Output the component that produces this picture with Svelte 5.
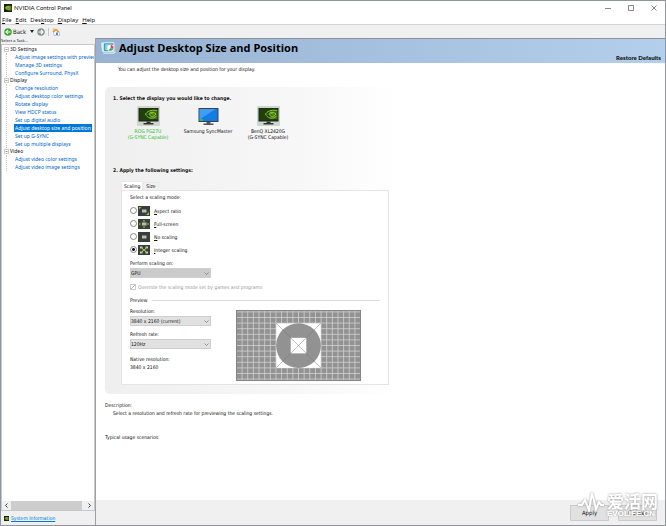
<script>
    const menu = ['File', 'Edit', 'Desktop', 'Display', 'Help'];
    const underlined = [0, 0, 3, 0, 0];

    const groups = [
        { title: '3D Settings', items: ['Adjust image settings with preview', 'Manage 3D settings', 'Configure Surround, PhysX'] },
        {
            title: 'Display',
            items: [
                'Change resolution',
                'Adjust desktop color settings',
                'Rotate display',
                'View HDCP status',
                'Set up digital audio',
                'Adjust desktop size and position',
                'Set up G-SYNC',
                'Set up multiple displays',
            ],
        },
        { title: 'Video', items: ['Adjust video color settings', 'Adjust video image settings'] },
    ];

    const displays = [
        { name: 'ROG PG27U', note: '(G-SYNC Capable)', gsync: true },
        { name: 'Samsung SyncMaster', note: '', gsync: false },
        { name: 'BenQ XL2420G', note: '(G-SYNC Capable)', gsync: true },
    ];

    const modes = [
        { id: 'aspect', key: 'A', rest: 'spect ratio' },
        { id: 'full', key: 'F', rest: 'ull-screen' },
        { id: 'none', key: 'N', rest: 'o scaling' },
        { id: 'integer', key: 'I', rest: 'nteger scaling' },
    ];

    const columns = Array.from({ length: 21 }, (_, i) => (i - 10) * 5.64 + 62.5);
    const rows = Array.from({ length: 13 }, (_, i) => (i - 6) * 5.6 + 35.5);

    let task = $state('Adjust desktop size and position');
    let display = $state('ROG PG27U');
    let mode = $state('integer');
</script>

{#snippet eye()}
    <svg class="eye" viewBox="0 0 16 16">
        <rect width="16" height="16" fill="#17200c" />
        <path d="M1 8C4 3 9 2 15 4V13C10 14 5 13 1 8Z" fill="#547b13" />
        <path d="M3 8C6 4 10 4 13 8C10 12 6 11 5 8C7 6 9 7 10 8" fill="none" stroke="#b5d36b" stroke-width="1.4" />
    </svg>
{/snippet}

{#snippet chevron()}
    <svg class="chevron" viewBox="0 0 5 3"><path d="M.5 .5L2.5 2.5L4.5 .5" fill="none" stroke="#777" stroke-width=".7" /></svg>
{/snippet}

<div class="window">
    <header class="titlebar">
        {@render eye()}
        <span class="caption">NVIDIA Control Panel</span>
        <button class="win" aria-label="Minimize"><svg viewBox="0 0 6 6"><path d="M0 3.5H6" /></svg></button>
        <button class="win" aria-label="Maximize"><svg viewBox="0 0 6 6"><path d="M.5 .5H5.5V5.5H.5Z" /></svg></button>
        <button class="win" aria-label="Close"><svg viewBox="0 0 6 6"><path d="M.5 .5L5.5 5.5M5.5 .5L.5 5.5" /></svg></button>
    </header>

    <nav class="menu">
        {#each menu as item, i}
            <button>{item.slice(0, underlined[i])}<u>{item[underlined[i]]}</u>{item.slice(underlined[i] + 1)}</button>
        {/each}
    </nav>

    <div class="toolbar">
        <button class="back">
            <svg class="round" viewBox="0 0 16 16">
                <circle cx="8" cy="8" r="7.5" fill="#35a82c" />
                <path d="M13 8H4M8 4L4 8L8 12" fill="none" stroke="#fff" stroke-width="2.4" />
            </svg>
            Back
        </button>
        <button class="arrow" aria-label="History"><svg viewBox="0 0 4 3"><path d="M0 0H4L2 3Z" fill="#222" /></svg></button>
        <button class="forward" aria-label="Forward">
            <svg class="round" viewBox="0 0 16 16">
                <circle cx="8" cy="8" r="7.5" fill="#8b8f92" />
                <path d="M3 8H12M8 4L12 8L8 12" fill="none" stroke="#fff" stroke-width="2.4" />
            </svg>
        </button>
        <button class="home" aria-label="Home">
            <svg class="round" viewBox="0 0 16 16">
                <path d="M3 8L10 3L15 9V15H4Z" fill="#f5f8fc" stroke="#7e9cc4" />
                <path d="M1 7L8 1L15 8L12 9L8 4L3 9Z" fill="#e98a2c" />
                <path d="M2 1H6L3 5H1Z" fill="#edb15f" />
                <rect x="8" y="9" width="4" height="5" fill="#5089ca" />
            </svg>
        </button>
    </div>

    <div class="body">
        <aside>
            <div class="select-task">Select a Task...</div>
            <div class="tree">
                {#each groups as group}
                    <div class="group">
                        <div class="group-title">
                            <svg class="toggle" viewBox="0 0 5 5"><path d="M.5 .5H4.5V4.5H.5Z" fill="#fff" stroke="#aaa" stroke-width=".6" /><path d="M1.5 2.5H3.5" stroke="#555" stroke-width=".6" /></svg>
                            {group.title}
                        </div>
                        <div class="items">
                            {#each group.items as item}
                                <a href="#task" class:selected={task === item} onclick={() => (task = item)}>{item}</a>
                            {/each}
                        </div>
                    </div>
                {/each}
            </div>
            <div class="scrollbar">
                <button aria-label="Scroll left"><svg viewBox="0 0 3 5"><path d="M2.5 .5L.5 2.5L2.5 4.5" /></svg></button>
                <div class="thumb"></div>
                <button aria-label="Scroll right"><svg viewBox="0 0 3 5"><path d="M.5 .5L2.5 2.5L.5 4.5" /></svg></button>
            </div>
            <div class="system">{@render eye()}<a href="#system">System Information</a></div>
        </aside>

        <main>
            <div class="banner">
                <svg class="banner-icon" viewBox="0 0 30 26">
                    <path d="M1 2H9L11 21L3 20Z" fill="#dcecf5" stroke="#68a7c7" />
                    <rect x="6" y="3" width="20" height="17" rx="1" fill="#3e9fc2" stroke="#e6f3fa" stroke-width="2" />
                    <path d="M10 6H16V17H10Z" fill="#87dcec" />
                    <circle cx="20" cy="13" r="6.5" fill="#f7f9f8" />
                    <path d="M20 13V7A6 6 0 0 1 25 15Z" fill="#e04b3a" />
                    <path d="M20 13L25 15A6 6 0 0 1 16 17Z" fill="#42a652" />
                    <path d="M6 23H25L29 20" fill="none" stroke="#dcecf5" stroke-width="2" />
                </svg>
                <h1>Adjust Desktop Size and Position</h1>
                <button class="restore">Restore Defaults</button>
            </div>

            <div class="content">
                <p class="intro">You can adjust the desktop size and position for your display.</p>

                <section class="card">
                    <h2>1. Select the display you would like to change.</h2>
                    <div class="displays">
                        {#each displays as item}
                            <button class="display" class:active={display === item.name} onclick={() => (display = item.name)}>
                                <svg class="monitor" viewBox="0 0 46 40">
                                    {#if item.gsync}
                                        <rect width="46" height="40" rx="2" fill="#cbd8cb" />
                                        <rect x="3" y="4" width="40" height="27" fill="#222922" />
                                        <rect x="5" y="6" width="36" height="22" fill="#1f4009" />
                                        <path d="M26 8H41V26H26Z" fill="#3a6c10" />
                                        <path d="M17 16C23 8 32 8 40 9M17 16C20 24 31 28 39 20M22 17C27 11 33 12 38 16C33 23 27 22 25 17C28 14 31 15 33 17" fill="none" stroke="#8cc832" stroke-width="2" />
                                        <path d="M19 31H27V34H33V37H13V34H19Z" fill="#303730" />
                                    {:else}
                                        <rect x="3" y="4" width="40" height="28" fill="#3a4148" />
                                        <rect x="5" y="6" width="36" height="24" fill="#137de5" />
                                        <path d="M5 6H37L5 27Z" fill="#3f9ff5" />
                                        <path d="M5 26H12V30H5Z" fill="#39b86b" />
                                        <path d="M19 32H27V35H33V38H13V35H19Z" fill="#55585b" />
                                    {/if}
                                </svg>
                                <span>{item.name}</span>
                                <span>{item.note}</span>
                            </button>
                        {/each}
                    </div>

                    <h2>2. Apply the following settings:</h2>
                    <div class="tabs">
                        <button class="tab current">Scaling</button>
                        <button class="tab">Size</button>
                    </div>
                    <div class="pane">
                        <fieldset>
                            <legend>Select a scaling mode:</legend>
                            {#each modes as item}
                                <label class="mode">
                                    <input type="radio" name="mode" value={item.id} bind:group={mode} />
                                    <svg class="mode-icon" viewBox="0 0 24 20">
                                        <rect width="24" height="20" fill="#3b3d3b" />
                                        {#if item.id === 'integer'}
                                            <path d="M4 3H9V7H4ZM15 3H20V7H15ZM4 13H9V17H4ZM15 13H20V17H15Z" fill="#ccd3cb" />
                                            <path d="M7 5L17 15M17 5L7 15" stroke="#91bd5f" stroke-width="2" />
                                            <rect x="9" y="8" width="6" height="4" fill="#82d02f" />
                                        {:else}
                                            <rect x="8" y="7" width="9" height="6" fill="#b9bdb9" />
                                        {/if}
                                        {#if item.id === 'aspect'}
                                            <path d="M2 2H7L2 7ZM22 18H16L22 12Z" fill="#86cf22" />
                                        {:else if item.id === 'full'}
                                            <path d="M12 1L15 5H9ZM12 19L15 15H9ZM1 10L5 7V13ZM23 10L19 7V13Z" fill="#76b82a" />
                                        {/if}
                                    </svg>
                                    <span><u>{item.key}</u>{item.rest}</span>
                                </label>
                            {/each}
                        </fieldset>

                        <label class="field-label" for="perform">Perform scaling on:</label>
                        <div class="select dim">
                            <select id="perform"><option>GPU</option></select>
                            {@render chevron()}
                        </div>
                        <label class="override">
                            <input type="checkbox" checked disabled />
                            Override the scaling mode set by games and programs
                        </label>

                        <div class="divider">Preview</div>
                        <div class="preview">
                            <div class="fields">
                                <label class="field-label" for="resolution">Resolution:</label>
                                <div class="select">
                                    <select id="resolution"><option>3840 x 2160 (current)</option></select>
                                    {@render chevron()}
                                </div>
                                <label class="field-label rate" for="refresh">Refresh rate:</label>
                                <div class="select">
                                    <select id="refresh"><option>120Hz</option></select>
                                    {@render chevron()}
                                </div>
                                <p class="native">Native resolution:<br />3840 x 2160</p>
                            </div>
                            <svg class="pattern" viewBox="0 0 125 71">
                                <rect width="125" height="71" fill="#929292" />
                                {#each columns as x}
                                    <path d="M{x} 0V71" stroke="#d2d2d2" stroke-width=".8" />
                                {/each}
                                {#each rows as y}
                                    <path d="M0 {y}H125" stroke="#d2d2d2" stroke-width=".8" />
                                {/each}
                                <rect x=".5" y=".5" width="124" height="70" fill="none" stroke="#858585" />
                                <rect x="40.2" y="13.3" width="44.6" height="44.6" fill="#fff" />
                                <circle cx="62.5" cy="35.6" r="22.4" fill="#929292" />
                                <rect x="54.7" y="27.8" width="15.6" height="15.6" fill="#fff" />
                                <path d="M40.2 13.3L84.8 57.9M84.8 13.3L40.2 57.9" stroke="#777" stroke-width=".5" />
                            </svg>
                        </div>
                    </div>
                </section>

                <div class="notes">
                    <p>Description:</p>
                    <p class="indent">Select a resolution and refresh rate for previewing the scaling settings.</p>
                    <p class="usage">Typical usage scenarios:</p>
                </div>
            </div>

            <footer>
                <button>Apply</button>
                <button>Cancel</button>
                <div class="watermark">
                    <svg viewBox="0 0 26 20"><path d="M0 13H4L7 8L11 18L14 1L18 17L21 10L23 13H26" /></svg>
                    <div>
                        <div class="mark-name">爱活网</div>
                        <div class="mark-site">EVOLIFE.CN</div>
                    </div>
                </div>
            </footer>
        </main>
    </div>
</div>

<style>
    :global(body) {
        margin: 0;
    }
    .window {
        box-sizing: border-box;
        min-height: 100vh;
        display: flex;
        flex-direction: column;
        border: 1px solid #8e959d;
        background: #f0f0f0;
        color: #111;
        font-family: "DejaVu Sans Condensed", "DejaVu Sans", sans-serif;
        font-size: 5px;
        line-height: 8px;
    }
    button, select, input {
        font: inherit;
        color: inherit;
        margin: 0;
        padding: 0;
        border: 0;
        background: none;
    }
    p, h1, h2, fieldset {
        margin: 0;
        padding: 0;
        border: 0;
    }
    svg {
        display: block;
        flex: none;
    }
    .eye {
        width: 8px;
        height: 8px;
    }
    .titlebar, .menu {
        display: flex;
        align-items: center;
        background: #fff;
        font-family: "Noto Sans", sans-serif;
        font-size: 6px;
    }
    .titlebar {
        height: 14px;
        padding-left: 3px;
    }
    .caption {
        flex: 1;
        padding-left: 2px;
        font-family: Lato, sans-serif;
    }
    .win {
        width: 23px;
        height: 14px;
        display: flex;
        align-items: center;
        justify-content: center;
    }
    .win svg {
        width: 6px;
        height: 6px;
        fill: none;
        stroke: #555;
        stroke-width: .7;
    }
    .menu {
        height: 9px;
        padding-left: 1px;
        gap: 4px;
        border-bottom: 1px solid #d4d4d4;
    }
    .toolbar {
        height: 13px;
        display: flex;
        align-items: center;
        padding-left: 3px;
        font-size: 6px;
    }
    .round {
        width: 8px;
        height: 8px;
    }
    .back {
        display: flex;
        align-items: center;
        gap: 1px;
    }
    .arrow {
        padding: 0 3px 0 4px;
    }
    .arrow svg {
        width: 4px;
        height: 3px;
    }
    .home {
        margin-left: 3px;
        padding-left: 3px;
        border-left: 1px solid #c5c5c5;
    }
    .body {
        flex: 1;
        display: flex;
    }
    aside {
        width: 94px;
        flex: none;
        display: flex;
        flex-direction: column;
        font-family: "Noto Sans", sans-serif;
    }
    .select-task {
        font-size: 4px;
        line-height: 6px;
    }
    .tree {
        flex: 1;
        overflow: hidden;
        background: #fff;
        border: 1px solid #c6c9cc;
        border-bottom: 0;
    }
    .group + .group {
        margin-top: -1px;
    }
    .group-title {
        display: flex;
        align-items: center;
        gap: 1px;
        padding-left: 2px;
    }
    .toggle {
        width: 5px;
        height: 5px;
    }
    .items {
        display: flex;
        flex-direction: column;
        align-items: flex-start;
        margin-left: 4px;
        padding-left: 7px;
        border-left: 1px dotted #c4c4c4;
    }
    .items a {
        color: #0066cc;
        text-decoration: none;
        white-space: nowrap;
        padding: 0 1px;
    }
    .items a.selected {
        background: #0078d7;
        color: #fff;
    }
    .scrollbar {
        height: 9px;
        display: flex;
        background: #f0f0f0;
        border: 1px solid #c6c9cc;
        border-top: 0;
    }
    .scrollbar button {
        width: 9px;
        display: flex;
        align-items: center;
        justify-content: center;
    }
    .scrollbar svg {
        width: 3px;
        height: 5px;
        fill: none;
        stroke: #444;
    }
    .thumb {
        flex: 1;
        margin-right: 3px;
        background: #cdcdcd;
    }
    .system {
        height: 14px;
        display: flex;
        align-items: center;
        gap: 2px;
        padding-left: 3px;
    }
    .system .eye {
        width: 5px;
        height: 5px;
    }
    .system a {
        color: #0078d7;
        font-family: "DejaVu Sans Condensed", "DejaVu Sans", sans-serif;
    }
    main {
        flex: 1;
        min-width: 0;
        display: flex;
        flex-direction: column;
        border-left: 1px solid #a0a0a0;
    }
    .banner {
        height: 24px;
        display: flex;
        padding: 0 4px;
        border-top: 1px solid #8c9197;
        background: linear-gradient(90deg, #98b2d3, #b4cfeb);
    }
    .banner-icon {
        width: 16px;
        height: 14px;
        margin-top: 2px;
    }
    h1 {
        flex: 1;
        padding-left: 3px;
        color: #000;
        font-family: "Open Sans", "Noto Sans", sans-serif;
        font-size: 11px;
        line-height: 17px;
        font-weight: 700;
    }
    .restore {
        align-self: flex-end;
        margin-bottom: 1px;
        font-family: Lato, "Open Sans", sans-serif;
        font-size: 6px;
        font-weight: 900;
    }
    .content {
        flex: 1;
        background: #fff;
        padding: 2px 9px;
    }
    .intro {
        padding-left: 13px;
    }
    .card {
        width: 292px;
        box-sizing: border-box;
        margin-top: 14px;
        padding: 7px 8px 9px;
        border-radius: 5px;
        background: linear-gradient(90deg, #efefef, #f7f7f7 65%, #fff);
    }
    h2 {
        font-size: 5px;
        line-height: 8px;
        font-weight: 700;
        color: #111;
    }
    .displays {
        display: flex;
        padding: 4px 0 26px 3px;
        align-items: flex-start;
    }
    .display {
        width: 60px;
        line-height: 6px;
        display: flex;
        flex-direction: column;
        align-items: center;
        padding-left: 4px;
        white-space: nowrap;
    }
    .display.active {
        color: #2fc02f;
    }
    .monitor {
        width: 23px;
        height: 20px;
        margin-bottom: 2px;
    }
    .tabs {
        display: flex;
        align-items: flex-end;
        margin: 7px 0 0 8px;
    }
    .tab {
        padding: 0 2px;
        line-height: 7px;
        border: 1px solid #e9e9e9;
        border-bottom: 0;
    }
    .tab.current {
        line-height: 8px;
        background: #fff;
    }
    .pane {
        margin-left: 8px;
        padding: 2px 8px 3px;
        background: #fff;
        border: 1px solid #e4e4e4;
    }
    legend {
        padding: 0;
        margin-bottom: 3px;
    }
    .mode {
        display: flex;
        align-items: center;
        height: 13px;
    }
    .mode span {
        padding-left: 4px;
    }
    input[type="radio"] {
        appearance: none;
        width: 7px;
        height: 7px;
        box-sizing: border-box;
        border: 1px solid #888;
        border-radius: 50%;
        background: #fff;
    }
    input[type="radio"]:checked {
        background: radial-gradient(circle, #111 35%, #fff 45%);
    }
    .mode-icon {
        width: 12px;
        height: 10px;
        margin-left: 1px;
    }
    .field-label {
        display: block;
    }
    fieldset + .field-label {
        margin-top: 3px;
    }
    .select {
        position: relative;
        width: 81px;
        height: 10px;
        margin-top: 1px;
    }
    .select select {
        appearance: none;
        display: block;
        box-sizing: border-box;
        width: 100%;
        height: 10px;
        line-height: 8px;
        background: #e1e1e1;
        border: 1px solid #cfcfcf;
        border-radius: 0;
        color: #111;
    }
    .select.dim select {
        background: #cbcbcb;
    }
    .chevron {
        position: absolute;
        right: 2px;
        top: 4px;
        width: 5px;
        height: 3px;
        pointer-events: none;
    }
    .override {
        display: flex;
        align-items: center;
        gap: 2px;
        margin-top: 5px;
        color: #999;
    }
    .override input {
        appearance: none;
        width: 6px;
        height: 6px;
        box-sizing: border-box;
        border: 1px solid #ccc;
        background: linear-gradient(135deg, #fff 45%, #bbb 45%, #bbb 60%, #fff 60%);
    }
    .divider {
        display: flex;
        align-items: center;
        gap: 4px;
        margin-top: 5px;
    }
    .divider::after {
        content: "";
        flex: 1;
        height: 1px;
        background: #ddd;
    }
    .preview {
        display: flex;
        gap: 25px;
        padding-top: 3px;
    }
    .rate {
        margin-top: 4px;
    }
    .native {
        margin-top: 6px;
    }
    .pattern {
        width: 125px;
        height: 71px;
        margin-top: 3px;
    }
    .notes {
        margin-top: 7px;
    }
    .indent {
        padding-left: 8px;
    }
    .usage {
        margin-top: 16px;
    }
    footer {
        position: relative;
        height: 25px;
        box-sizing: border-box;
        display: flex;
        justify-content: flex-end;
        gap: 9px;
        padding: 5px 8px 4px;
        background: #f0f0f0;
    }
    footer button {
        width: 39px;
        height: 16px;
        font-size: 6px;
        background: #e1e1e1;
        border: 1px solid #ccc;
    }
    .watermark {
        position: absolute;
        right: 7px;
        bottom: 7px;
        display: flex;
        gap: 3px;
        color: #fff;
        pointer-events: none;
        filter: drop-shadow(0 0 1px #999);
    }
    .watermark svg {
        width: 26px;
        height: 20px;
        fill: none;
        stroke: #fff;
        stroke-width: 2;
    }
    .mark-name {
        font-family: "Noto Sans CJK SC", sans-serif;
        font-size: 17px;
        line-height: 18px;
        font-weight: 700;
    }
    .mark-site {
        font-family: "Liberation Sans", sans-serif;
        font-size: 8px;
        line-height: 8px;
        font-weight: 700;
    }
</style>
